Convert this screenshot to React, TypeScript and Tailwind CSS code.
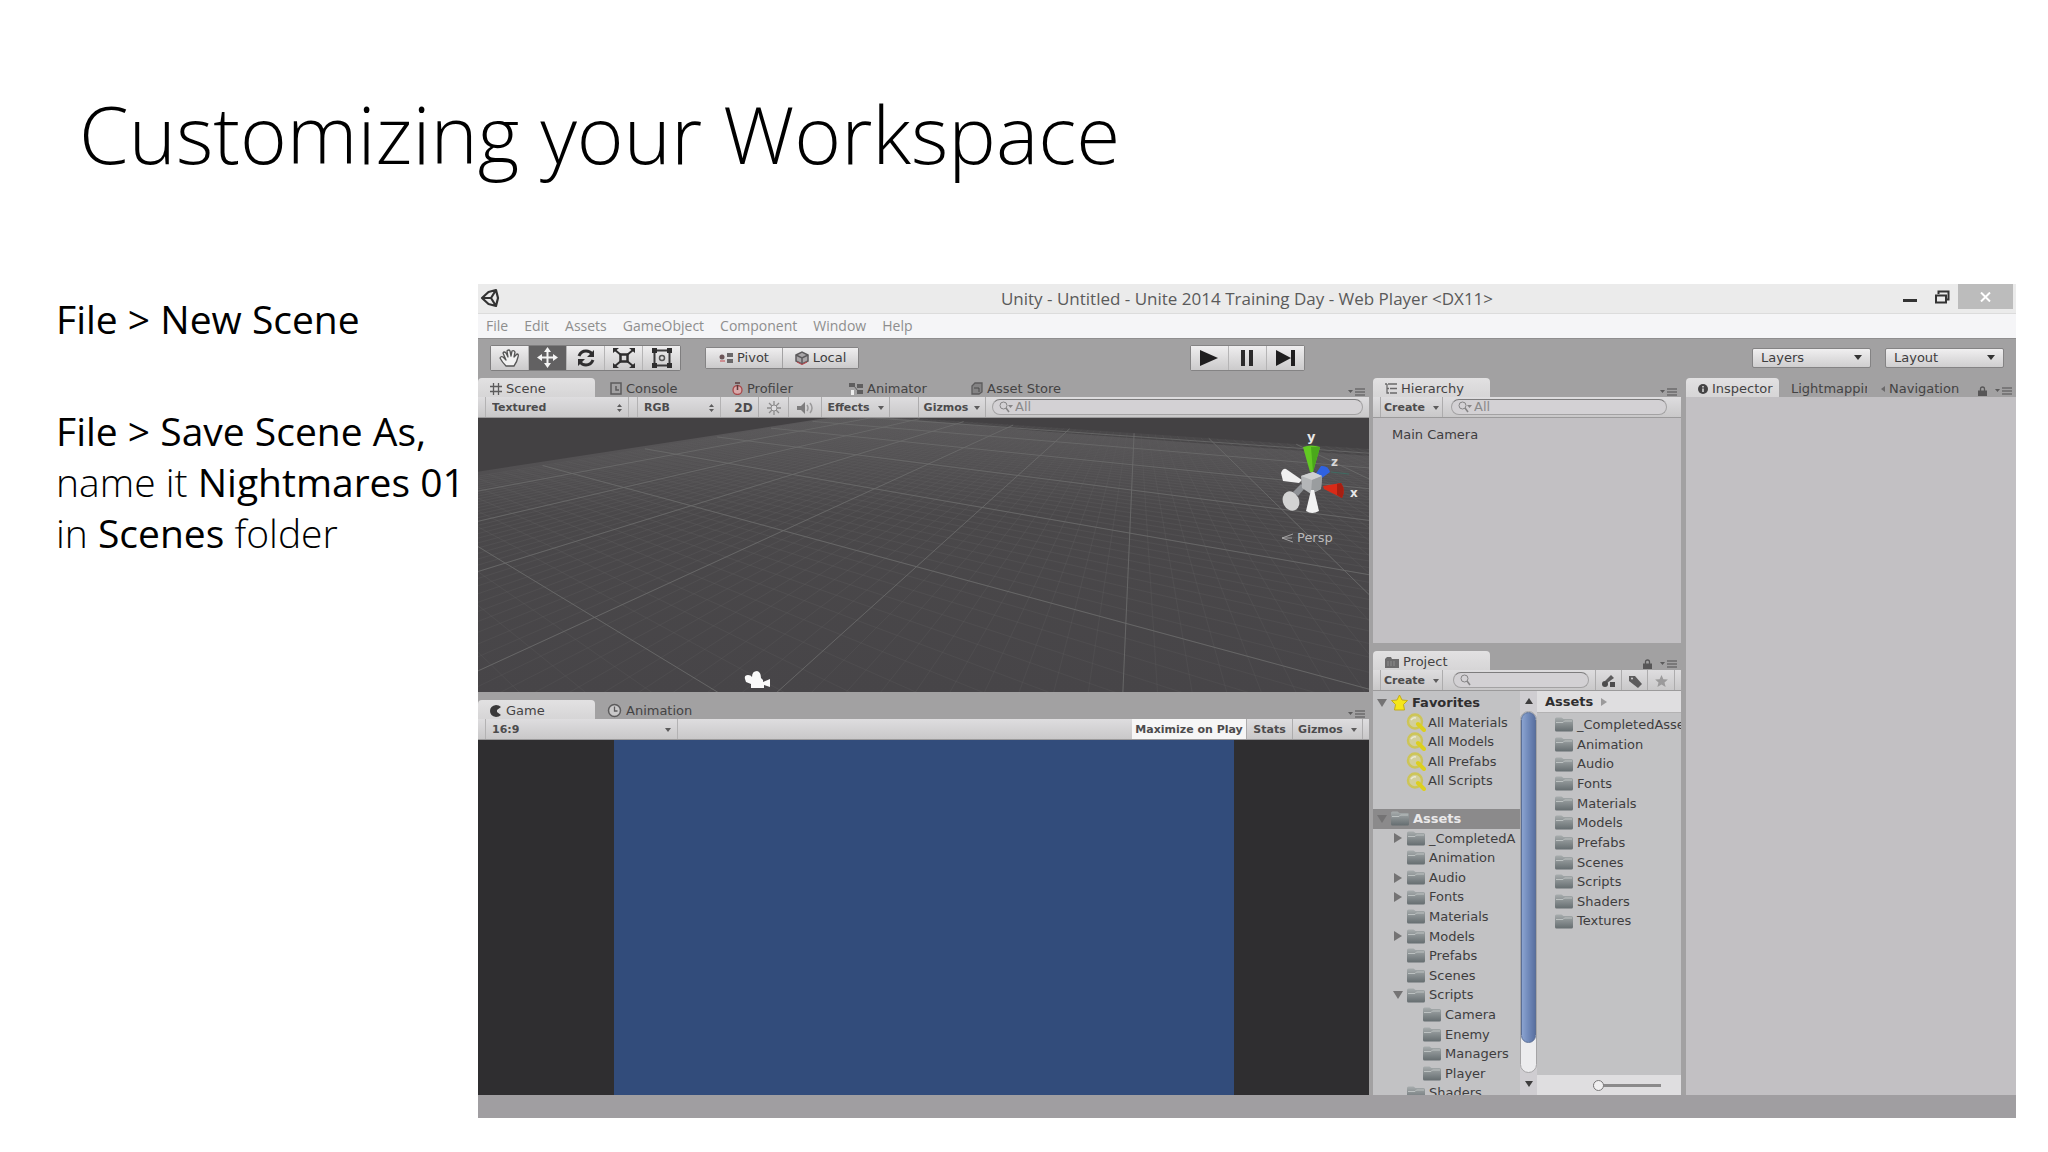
import type { ReactNode } from "react";

const TREE = [
  { name: "_CompletedAssets", arrow: "right", depth: 1, label: "_CompletedA" },
  { name: "Animation", depth: 1 },
  { name: "Audio", arrow: "right", depth: 1 },
  { name: "Fonts", arrow: "right", depth: 1 },
  { name: "Materials", depth: 1 },
  { name: "Models", arrow: "right", depth: 1 },
  { name: "Prefabs", depth: 1 },
  { name: "Scenes", depth: 1 },
  { name: "Scripts", arrow: "down", depth: 1 },
  { name: "Camera", depth: 2 },
  { name: "Enemy", depth: 2 },
  { name: "Managers", depth: 2 },
  { name: "Player", depth: 2 },
  { name: "Shaders", depth: 1 },
];

const ASSETS = [
  "_CompletedAssets",
  "Animation",
  "Audio",
  "Fonts",
  "Materials",
  "Models",
  "Prefabs",
  "Scenes",
  "Scripts",
  "Shaders",
  "Textures",
];

/* ---------- icons ---------- */

function Folder() {
  return (
    <svg width="18" height="15" viewBox="0 0 18 15" className="shrink-0">
      <defs>
        <linearGradient id="folder" x1="0" y1="0" x2="0" y2="1">
          <stop offset="0" stopColor="#a7acad" />
          <stop offset="1" stopColor="#656d70" />
        </linearGradient>
      </defs>
      <path d="M0 2Q0 0.500 1.500 0.500H6.500L8.500 2H16.500Q18 2 18 3.500V13Q18 14.500 16.500 14.500H1.500Q0 14.500 0 13z" fill="url(#folder)" />
      <path d="M1 5.500H8L9.500 4H17" stroke="#bcc1c1" fill="none" />
    </svg>
  );
}

function Arrow({ dir }: { dir: string }) {
  return (
    <svg width="10" height="10" viewBox="0 0 10 10" className="shrink-0">
      <path d={dir === "down" ? "M0 1H10L5 9z" : "M1 0V10L9 5z"} fill="#747374" />
    </svg>
  );
}

function Caret() {
  return (
    <svg width="6" height="4" viewBox="0 0 6 4" className="shrink-0">
      <path d="M0 0H6L3 4z" fill="#5c5b5c" />
    </svg>
  );
}

function UpDown() {
  return (
    <svg width="5" height="8" viewBox="0 0 5 8" className="shrink-0">
      <path d="M0 3H5L2.500 0zM0 5H5L2.500 8z" fill="#5c5b5c" />
    </svg>
  );
}

function PanelMenu() {
  return (
    <svg width="17" height="8" viewBox="0 0 17 8" className="shrink-0">
      <path d="M0 2H5L2.500 5z" fill="#5c5b5c" />
      <path d="M7 1H17M7 4H17M7 7H17" stroke="#6c6b6c" strokeWidth="1.500" />
    </svg>
  );
}

function Lock() {
  return (
    <svg width="9" height="10" viewBox="0 0 9 10" className="shrink-0">
      <path d="M2.500 5V3Q2.500 1 4.500 1T6.500 3V5" stroke="#575657" fill="none" strokeWidth="1.300" />
      <rect y="4.500" width="9" height="5.500" fill="#575657" />
    </svg>
  );
}

function Magnifier({ caret }: { caret?: boolean }) {
  return (
    <svg width="14" height="12" viewBox="0 0 14 12" className="shrink-0">
      <circle cx="4.500" cy="4.500" r="3.500" stroke="#858485" fill="none" />
      <path d="M7 7L10 11" stroke="#858485" strokeWidth="1.500" />
      {caret && <path d="M9 4H14L11.500 7z" fill="#858485" />}
    </svg>
  );
}

function FavoriteSearch() {
  return (
    <svg width="20" height="19" viewBox="0 0 20 19" className="shrink-0">
      <circle cx="9" cy="8.500" r="7" fill="#d2cf9c" stroke="#cdc558" strokeWidth="2.500" />
      <path d="M12 11L18 17" stroke="#dccf1e" strokeWidth="4" strokeLinecap="round" />
      <path d="M5 7Q7 4 10 5" stroke="#ecead2" strokeWidth="1.500" fill="none" />
    </svg>
  );
}

function UnityLogo() {
  return (
    <svg width="20" height="20" viewBox="0 0 20 20">
      <path
        d="M2 10L8.500 4L16 2L18 10L16 18L8.500 16zM2 10H11M11 10L16 2M11 10L16 18"
        fill="none"
        stroke="#333"
        strokeWidth="2.200"
        strokeLinejoin="round"
      />
    </svg>
  );
}

/* ---------- scene floor ---------- */

// unit square -> floor quad in perspective
function project(a: number, b: number) {
  const w = 1 - 0.3643 * a + 0.6961 * b;
  return `${((540 + 178.4 * a + 799.9 * b) / w).toFixed(1)} ${((362 + 44.9 * a - 87.2 * b) / w).toFixed(1)}`;
}

const A_MIN = -1.85;
const B_MAX = 2.67;

function floorLines(step: number) {
  let d = "";
  for (let i = Math.ceil(A_MIN / step); i * step < 6; i++) {
    const a = i * step;
    const near = (0.12 - 1 + 0.3643 * a) / 0.6961;
    if (near < B_MAX) d += `M${project(a, near)}L${project(a, B_MAX)}`;
  }
  for (let i = Math.ceil(-1.4 / step); i * step <= B_MAX; i++) {
    const b = i * step;
    const near = (1 + 0.6961 * b - 0.12) / 0.3643;
    if (near > A_MIN) d += `M${project(A_MIN, b)}L${project(near, b)}`;
  }
  return d;
}

function SceneView() {
  return (
    <div className="relative h-[274px] shrink-0 overflow-hidden bg-[#434143]">
      <svg className="block h-full w-full" viewBox="14 24 1535 822" preserveAspectRatio="none">
        <defs>
          <linearGradient id="floor" x1="0" y1="0" x2="0" y2="1">
            <stop offset="0" stopColor="#5a585a" />
            <stop offset="0.350" stopColor="#4a484a" />
            <stop offset="1" stopColor="#474548" />
          </linearGradient>
          <linearGradient id="fade" gradientUnits="userSpaceOnUse" x1="0" y1="24" x2="0" y2="846">
            <stop offset="0" stopColor="#5e5d5e" stopOpacity="0.200" />
            <stop offset="0.250" stopColor="#5e5d5e" stopOpacity="0.400" />
            <stop offset="1" stopColor="#5e5d5e" stopOpacity="0.250" />
          </linearGradient>
        </defs>
        <path d="M14 185L600 28L620 24H730L1000 66L1549 138V846H14z" fill="url(#floor)" />
        <path d={floorLines(0.05)} stroke="url(#fade)" fill="none" vectorEffect="non-scaling-stroke" />
        <path
          d={floorLines(0.5)}
          stroke="#6c6b6c"
          strokeOpacity="0.800"
          fill="none"
          vectorEffect="non-scaling-stroke"
        />
      </svg>

      {/* camera gizmo */}
      <svg className="absolute bottom-0.5 left-[266px]" width="27" height="20" viewBox="0 0 27 20">
        <path
          d="M1 9Q0 5 4 5Q7 5 8 7Q8 1 13 1Q17 2 17 8L19 10V12L26 9V17L20 15V18H7V14L2 12z"
          fill="#fafafa"
        />
      </svg>

      {/* axis gizmo */}
      <div className="absolute right-2 top-3 w-20 font-['DejaVu_Sans'] text-[#b9b8b9]">
        <svg width="80" height="86" viewBox="0 0 80 86">
          <text x="26" y="11" fontSize="13" fontWeight="bold" fill="#e8e8e8">y</text>
          <text x="50" y="36" fontSize="12" fontWeight="bold" fill="#d8d8d8">z</text>
          <text x="69" y="67" fontSize="12" fontWeight="bold" fill="#e8e8e8">x</text>
          <path d="M22 17Q30 14 39 17L32 42H29z" fill="#62c922" />
          <path d="M30 17L39 17L32 42z" fill="#4aa81b" />
          <path d="M34 45L40 36Q47 35 49 42L41 48z" fill="#2f62e0" />
          <path d="M50 42L68 44" stroke="#3f6b62" />
          <path d="M0 43Q2 38 5 39L21 50L18 53L2 51z" fill="#f0f0f0" />
          <path d="M12 62L20 54L24 58L17 66z" fill="#8f9296" />
          <ellipse cx="10" cy="71" rx="8" ry="10" transform="rotate(-25 10 71)" fill="#d3d3d3" />
          <path d="M20 46L32 42L41 46L40 59L30 64L21 58z" fill="#b4b6b8" />
          <path d="M20 46L32 42L41 46L31 50z" fill="#cfd0d1" />
          <path d="M31 50L41 46L40 59L30 64z" fill="#9a9d9f" />
          <path d="M30 60L33 60L38 81Q31 85 25 81z" fill="#f2f2f2" />
          <path d="M42 56L60 53Q65 60 61 68L43 59z" fill="#d92a17" />
          <path d="M56 54L60 53Q65 60 61 68L56 65z" fill="#a61f12" />
        </svg>
        <div className="mt-3 flex items-center gap-1 text-[13px]">
          <svg width="12" height="10" viewBox="0 0 12 10">
            <path d="M12 1L1 5L12 9M1 5H11" stroke="#a5a4a5" fill="none" />
          </svg>
          Persp
        </div>
      </div>
    </div>
  );
}

/* ---------- building blocks ---------- */

function Tab({
  icon,
  children,
  active,
  className = "w-[117px]",
}: {
  icon?: ReactNode;
  children: ReactNode;
  active?: boolean;
  className?: string;
}) {
  return (
    <button
      role="tab"
      aria-selected={!!active}
      className={`flex h-[19px] shrink-0 items-center gap-1 overflow-hidden whitespace-nowrap pl-3 pt-0.5 text-[13px] text-[#444344] ${
        active ? "rounded-t-sm bg-linear-to-b from-[#e2e1e2] to-[#d6d5d6]" : ""
      } ${className}`}
    >
      {icon}
      {children}
    </button>
  );
}

function Bar({ children }: { children: ReactNode }) {
  return (
    <div className="flex h-[21px] shrink-0 items-stretch border-b border-[#9b9a9b] bg-linear-to-b from-[#dedddf] to-[#c9c8c9] pl-[7px] text-[11px] font-bold text-[#4c4b4c]">
      {children}
    </div>
  );
}

function BarButton({
  children,
  className = "",
  label,
}: {
  children: ReactNode;
  className?: string;
  label?: string;
}) {
  return (
    <button
      aria-label={label}
      className={`flex shrink-0 items-center justify-center whitespace-nowrap border-r border-[#adacad] pt-0.5 ${className}`}
    >
      {children}
    </button>
  );
}

function BarSelect({
  label,
  value,
  className,
  icon,
}: {
  label: string;
  value: string;
  className: string;
  icon: ReactNode;
}) {
  return (
    <label className={`flex shrink-0 items-center border-x border-[#b3b2b3] px-1.5 pt-0.5 ${className}`}>
      <select aria-label={label} className="min-w-0 flex-1 appearance-none bg-transparent outline-none">
        <option>{value}</option>
      </select>
      {icon}
    </label>
  );
}

function Search({ label, value, className = "" }: { label: string; value?: string; className?: string }) {
  return (
    <label
      className={`my-0.5 flex items-center gap-0.5 rounded-full border border-[#a3a2a3] border-t-[#7d7c7d] bg-[#d3d1d4] pl-1.5 ${className}`}
    >
      <Magnifier caret={!!value} />
      <input
        aria-label={label}
        defaultValue={value}
        className="w-full min-w-0 bg-transparent text-[13px] font-normal text-[#8a898a] outline-none"
      />
    </label>
  );
}

function ToolButton({ label, active, children }: { label: string; active?: boolean; children: ReactNode }) {
  return (
    <button
      aria-label={label}
      className={`flex h-6 w-[37px] items-center justify-center ${
        active ? "bg-[#626162]" : "bg-linear-to-b from-[#efeeef] to-[#cbcacb]"
      }`}
    >
      {children}
    </button>
  );
}

function TopSelect({ label }: { label: string }) {
  return (
    <label className="flex h-5 w-[119px] items-center rounded-xs border border-[#848384] bg-linear-to-b from-[#f0eff0] to-[#cfcecf] px-2 text-[13px] text-[#3e3d3e]">
      <select aria-label={label} className="min-w-0 flex-1 appearance-none bg-transparent outline-none">
        <option>{label}</option>
      </select>
      <svg width="8" height="5" viewBox="0 0 8 5">
        <path d="M0 0H8L4 5z" fill="#333" />
      </svg>
    </label>
  );
}

/* ---------- window chrome ---------- */

function TitleBar() {
  return (
    <div className="flex h-[30px] shrink-0 items-start border-b border-[#dcdcdc] bg-[#ebebeb]">
      <div className="flex w-[124px] items-center pl-0.5 pt-1">
        <UnityLogo />
      </div>
      <div className="flex-1 text-center font-['Open_Sans'] text-[17px] leading-[30px] text-[#5a5a5a]">
        Unity - Untitled - Unite 2014 Training Day - Web Player &lt;DX11&gt;
      </div>
      <div className="flex w-[124px] items-start justify-end pr-[3px]">
        <button aria-label="Minimize" className="flex h-[25px] w-8 items-center justify-center pt-2">
          <svg width="14" height="3" viewBox="0 0 14 3">
            <path d="M0 1.500H14" stroke="#333" strokeWidth="3" />
          </svg>
        </button>
        <button aria-label="Restore" className="flex h-[25px] w-8 items-center justify-center">
          <svg width="15" height="14" viewBox="0 0 15 14">
            <path d="M3.500 4V1.500H13.500V9.500H11" stroke="#333" strokeWidth="2" fill="none" />
            <path d="M1 5.500H11V12.500H1z" stroke="#333" strokeWidth="2" fill="none" />
          </svg>
        </button>
        <button aria-label="Close" className="flex h-[25px] w-[55px] items-center justify-center bg-[#bcbcbc]">
          <svg width="11" height="10" viewBox="0 0 11 10">
            <path d="M1 0.500L10 9.500M10 0.500L1 9.500" stroke="#fff" strokeWidth="2" />
          </svg>
        </button>
      </div>
    </div>
  );
}

function MenuBar() {
  return (
    <nav className="flex h-6 shrink-0 items-center gap-4 bg-[#f5f5f7] pl-2 font-['Open_Sans'] text-sm text-[#8e8e8e]">
      <button>File</button>
      <button>Edit</button>
      <button>Assets</button>
      <button>GameObject</button>
      <button>Component</button>
      <button>Window</button>
      <button>Help</button>
    </nav>
  );
}

function Toolbar() {
  return (
    <div className="grid h-10 shrink-0 grid-cols-[1fr_auto_1fr] items-center border-t border-[#8f8e8f] px-3 pb-0.5">
      <div className="flex items-center gap-6">
        <div className="flex gap-px rounded-xs border border-[#7f7e7f] bg-[#b5b4b5]">
          <ToolButton label="Hand">
            <svg width="22" height="20" viewBox="0 0 22 20">
              <path
                d="M7 18Q3 14 1 10Q2 8 4 9L7 12L4 5Q5 3 7 5L9 9L8 3Q10 1 11 3L12 8L13 3Q15 2 16 4L15 9L18 6Q20 6 19 9Q18 14 15 18z"
                fill="#f2f2f2"
                stroke="#555"
                strokeWidth="1.300"
                strokeLinejoin="round"
              />
            </svg>
          </ToolButton>
          <ToolButton label="Move" active>
            <svg width="21" height="21" viewBox="0 0 21 21">
              <path d="M10.500 4V17M4 10.500H17" stroke="#f5f5f5" strokeWidth="2" />
              <path
                d="M10.500 0L14 5H7zM10.500 21L14 16H7zM0 10.500L5 7V14zM21 10.500L16 7V14z"
                fill="#f5f5f5"
              />
            </svg>
          </ToolButton>
          <ToolButton label="Rotate">
            <svg width="20" height="18" viewBox="0 0 20 18">
              <path d="M3 7Q5 2 10 2Q14 2 16 5" stroke="#2f2e2f" strokeWidth="3" fill="none" />
              <path d="M17 11Q15 16 10 16Q6 16 4 13" stroke="#2f2e2f" strokeWidth="3" fill="none" />
              <path d="M18 1V8H11zM2 17V10H9z" fill="#2f2e2f" />
            </svg>
          </ToolButton>
          <ToolButton label="Scale">
            <svg width="22" height="20" viewBox="0 0 22 20">
              <path d="M2 2L8 7M20 2L14 7M2 18L8 13M20 18L14 13" stroke="#2f2e2f" strokeWidth="2" />
              <path d="M0 0H6L0 5zM22 0H16L22 5zM0 20H6L0 15zM22 20H16L22 15z" fill="#2f2e2f" />
              <rect x="7.500" y="6.500" width="7" height="7" stroke="#2f2e2f" strokeWidth="2.500" fill="none" />
            </svg>
          </ToolButton>
          <ToolButton label="Rect">
            <svg width="20" height="20" viewBox="0 0 20 20">
              <rect x="2.500" y="2.500" width="15" height="15" stroke="#3a393a" strokeWidth="2" fill="none" />
              <path d="M0 0H5V5H0zM15 0H20V5H15zM0 15H5V20H0zM15 15H20V20H15z" fill="#2f2e2f" />
              <circle cx="10" cy="10" r="2.500" stroke="#555" strokeWidth="1.500" fill="none" />
            </svg>
          </ToolButton>
        </div>
        <div className="flex gap-px rounded-xs border border-[#848384] bg-[#a3a2a3] text-[13px] text-[#3e3d3e]">
          <button className="flex h-5 w-[76px] items-center justify-center gap-1 bg-linear-to-b from-[#efeeef] to-[#cbcacb]">
            <svg width="14" height="10" viewBox="0 0 14 10">
              <circle cx="3" cy="4" r="2.500" fill="#6b5558" />
              <path d="M8 0H14V4H8zM8 6H14V10H8z" fill="#6a686a" />
              <path d="M1 8H6" stroke="#c4474f" />
            </svg>
            Pivot
          </button>
          <button className="flex h-5 w-[75px] items-center justify-center gap-1 bg-linear-to-b from-[#efeeef] to-[#cbcacb]">
            <svg width="14" height="14" viewBox="0 0 14 14">
              <path d="M1 4L7 1L13 4V10L7 13L1 10z" fill="#a9a6a8" stroke="#5d5b5d" strokeWidth="1.500" />
              <path d="M1 4L7 7L13 4M7 7V13" stroke="#5d5b5d" strokeWidth="1.500" fill="none" />
              <path d="M2 11L7 13.500L12 11" stroke="#c4474f" fill="none" />
            </svg>
            Local
          </button>
        </div>
      </div>
      <div className="flex gap-px rounded-xs border border-[#848384] bg-[#b5b4b5]">
        <ToolButton label="Play">
          <svg width="18" height="16" viewBox="0 0 18 16">
            <path d="M0 0L18 8L0 16z" fill="#1f1e1f" />
          </svg>
        </ToolButton>
        <ToolButton label="Pause">
          <svg width="12" height="16" viewBox="0 0 12 16">
            <path d="M0 0H4V16H0zM8 0H12V16H8z" fill="#2c2b2c" />
          </svg>
        </ToolButton>
        <ToolButton label="Step">
          <svg width="19" height="16" viewBox="0 0 19 16">
            <path d="M0 0L15 8L0 16zM15 0H19V16H15z" fill="#1f1e1f" />
          </svg>
        </ToolButton>
      </div>
      <div className="flex justify-end gap-3.5">
        <TopSelect label="Layers" />
        <TopSelect label="Layout" />
      </div>
    </div>
  );
}

/* ---------- panels ---------- */

function ScenePanel() {
  return (
    <section className="shrink-0">
      <div role="tablist" className="flex">
        <Tab
          active
          icon={
            <svg width="12" height="12" viewBox="0 0 12 12">
              <path d="M3.500 0V12M8.500 0V12M0 3.500H12M0 8.500H12" stroke="#5c5b5c" strokeWidth="1.300" />
            </svg>
          }
        >
          Scene
        </Tab>
        <Tab
          className="ml-[3px] w-[122px]"
          icon={
            <svg width="12" height="13" viewBox="0 0 12 13">
              <path d="M1 1H11V12H1zM6 4V8H9" stroke="#5c5b5c" strokeWidth="1.500" fill="none" />
            </svg>
          }
        >
          Console
        </Tab>
        <Tab
          icon={
            <svg width="11" height="13" viewBox="0 0 11 13">
              <circle cx="5.500" cy="8" r="4.500" fill="#d9a9aa" stroke="#a8484a" strokeWidth="1.300" />
              <path d="M5.500 8V3M3 1H8" stroke="#5c3a3b" strokeWidth="1.500" />
            </svg>
          }
        >
          Profiler
        </Tab>
        <Tab
          className="w-[122px]"
          icon={
            <svg width="14" height="12" viewBox="0 0 14 12">
              <path d="M0 0H6V4H0zM8 1H14V5H8zM8 7H14V11H8z" fill="#5f5e5f" />
              <path d="M2 7H5V12H2z" fill="#ececec" />
              <path d="M5 3L9 8" stroke="#5f5e5f" />
            </svg>
          }
        >
          Animator
        </Tab>
        <Tab
          icon={
            <svg width="12" height="13" viewBox="0 0 12 13">
              <path d="M1 4L4 1H11V10L8 12H1z" fill="#848384" stroke="#5c5b5c" strokeWidth="1.300" />
              <path d="M3 6H8V10" stroke="#4b4a4b" fill="none" />
            </svg>
          }
        >
          Asset Store
        </Tab>
        <button aria-label="Panel menu" className="ml-auto pr-1 pt-2">
          <PanelMenu />
        </button>
      </div>
      <Bar>
        <BarSelect label="Draw mode" value="Textured" className="w-[144px]" icon={<UpDown />} />
        <BarSelect label="Render mode" value="RGB" className="ml-2 w-[84px]" icon={<UpDown />} />
        <BarButton className="ml-2 w-[30px]">
          <span className="text-[12px]">2D</span>
        </BarButton>
        <BarButton label="Scene lighting" className="w-[30px]">
          <svg width="14" height="14" viewBox="0 0 14 14">
            <path d="M7 0V14M0 7H14M2 2L12 12M12 2L2 12" stroke="#8c8b8c" strokeWidth="1.300" />
            <circle cx="7" cy="7" r="3" fill="#dedddf" stroke="#8c8b8c" />
          </svg>
        </BarButton>
        <BarButton label="Audio" className="w-[33px]">
          <svg width="17" height="12" viewBox="0 0 17 12">
            <path d="M0 4H4L8 0V12L4 8H0z" fill="#7d7c7d" />
            <path d="M10 3Q12 6 10 9M13 1Q17 6 13 11" stroke="#9a999a" strokeWidth="1.500" fill="none" />
          </svg>
        </BarButton>
        <BarButton className="w-[68px] gap-2">
          Effects <Caret />
        </BarButton>
        <BarButton className="ml-7 w-[68px] gap-1.5 border-l">
          Gizmos <Caret />
        </BarButton>
        <Search label="Search scene" value="All" className="ml-1.5 mr-1.5 flex-1" />
      </Bar>
      <SceneView />
    </section>
  );
}

function GamePanel() {
  return (
    <section className="flex min-h-0 flex-1 flex-col pt-2">
      <div role="tablist" className="flex">
        <Tab
          active
          icon={
            <svg width="12" height="12" viewBox="0 0 12 12">
              <path d="M6 0Q9 0 11 2L7 5V7L11 10Q9 12 6 12Q0 11 0 6T6 0z" fill="#3a393a" />
            </svg>
          }
        >
          Game
        </Tab>
        <Tab
          icon={
            <svg width="15" height="15" viewBox="0 0 15 15">
              <circle cx="7.500" cy="7.500" r="6" fill="#c9c8c9" stroke="#5c5b5c" strokeWidth="1.500" />
              <path d="M7.500 3.500V8H10.500" stroke="#5c5b5c" strokeWidth="1.300" fill="none" />
            </svg>
          }
        >
          Animation
        </Tab>
        <button aria-label="Panel menu" className="ml-auto pr-1 pt-2">
          <PanelMenu />
        </button>
      </div>
      <Bar>
        <BarSelect label="Aspect" value="16:9" className="w-[193px]" icon={<Caret />} />
        <BarButton className="ml-auto w-[115px] bg-[#f6f6f6]">Maximize on Play</BarButton>
        <BarButton className="w-[46px]">Stats</BarButton>
        <BarButton className="mr-1.5 w-[70px] gap-2">
          Gizmos <Caret />
        </BarButton>
      </Bar>
      <div className="flex flex-1 justify-center bg-[#2f2e30]">
        <div className="w-[620px] bg-[#324c7b]" />
      </div>
    </section>
  );
}

function HierarchyPanel() {
  return (
    <section className="flex h-[265px] shrink-0 flex-col">
      <div role="tablist" className="flex">
        <Tab
          active
          icon={
            <svg width="12" height="11" viewBox="0 0 12 11">
              <path d="M0 1H2M3 1H12M5 5.500H12M5 10H12M2 1V10H4M2 5.500H4" stroke="#6a696a" fill="none" strokeWidth="1.300" />
            </svg>
          }
        >
          Hierarchy
        </Tab>
        <button aria-label="Panel menu" className="ml-auto pr-1 pt-2">
          <PanelMenu />
        </button>
      </div>
      <Bar>
        <BarButton className="w-[63px] gap-2 border-l">
          Create <Caret />
        </BarButton>
        <Search label="Search hierarchy" value="All" className="ml-2 mr-3.5 flex-1" />
      </Bar>
      <ul className="flex-1 bg-[#c2c0c3] pl-[19px] pt-[7px] text-[13px] text-[#3e3d3e]">
        <li>
          <button>Main Camera</button>
        </li>
      </ul>
    </section>
  );
}

function FavoritesTree() {
  return (
    <div className="min-w-0 flex-1 overflow-hidden bg-[#c2c2c4] pt-0.5">
      <ul className="grid h-[98px] auto-rows-fr">
        <li className="flex items-center gap-1 pl-1 text-[13px] font-bold text-[#2f2e2f]">
          <Arrow dir="down" />
          <svg width="17" height="17" viewBox="0 0 17 17" className="shrink-0">
            <path
              d="M8.500 1L11 6L16.500 6.500L12.500 10.500L13.500 16H3.500L4.500 10.500L0.500 6.500L6 6z"
              fill="#f5e61a"
              stroke="#c4ab1a"
            />
          </svg>
          Favorites
        </li>
        {["All Materials", "All Models", "All Prefabs", "All Scripts"].map((name) => (
          <li key={name} className="flex items-center gap-0.5 whitespace-nowrap pl-[33px]">
            <FavoriteSearch />
            {name}
          </li>
        ))}
      </ul>
      <ul className="mt-[18px] grid h-[294px] auto-rows-fr">
        <li className="flex items-center gap-1 bg-[#8b8a8b] pl-1 text-[13px] font-bold text-[#e9e8e9]">
          <Arrow dir="down" />
          <Folder />
          Assets
        </li>
        {TREE.map((item) => (
          <li
            key={item.name}
            className={`flex items-center gap-1 whitespace-nowrap ${item.depth === 2 ? "pl-[50px]" : item.arrow ? "pl-5" : "pl-[34px]"}`}
          >
            {item.arrow && <Arrow dir={item.arrow} />}
            <Folder />
            {item.label ?? item.name}
          </li>
        ))}
      </ul>
    </div>
  );
}

function TreeScrollbar() {
  return (
    <div className="flex w-[17px] shrink-0 flex-col bg-[#cfcdd1]">
      <button aria-label="Scroll up" className="flex h-5 items-center justify-center">
        <svg width="8" height="6" viewBox="0 0 8 6">
          <path d="M0 6H8L4 0z" fill="#3e3d3e" />
        </svg>
      </button>
      <div className="flex flex-1 flex-col rounded-full border border-[#a5a4a6] bg-[#ececee]">
        <div className="h-[92%] rounded-full border border-[#5b6f96] bg-linear-to-r from-[#8ba3d0] via-[#7089ba] to-[#5a70a0]" />
      </div>
      <button aria-label="Scroll down" className="flex h-[22px] items-center justify-center">
        <svg width="8" height="6" viewBox="0 0 8 6">
          <path d="M0 0H8L4 6z" fill="#3e3d3e" />
        </svg>
      </button>
    </div>
  );
}

function ProjectPanel() {
  return (
    <section className="flex min-h-0 flex-1 flex-col pt-2">
      <div role="tablist" className="flex">
        <Tab
          active
          icon={
            <svg width="14" height="12" viewBox="0 0 14 12">
              <path d="M0 3L2 1H6L7 3H14V12H0z" fill="#6d6c6d" />
              <path d="M3 5V10M6 5V10M9 5V10" stroke="#8f8e8f" />
            </svg>
          }
        >
          Project
        </Tab>
        <div className="ml-auto flex items-center gap-2 pr-1 pt-1.5">
          <button aria-label="Lock">
            <Lock />
          </button>
          <button aria-label="Panel menu">
            <PanelMenu />
          </button>
        </div>
      </div>
      <Bar>
        <BarButton className="w-[63px] gap-2 border-l">
          Create <Caret />
        </BarButton>
        <Search label="Search project" className="ml-2.5 mr-1.5 flex-1" />
        <BarButton label="Search by type" className="w-[27px] border-l">
          <svg width="14" height="13" viewBox="0 0 14 13">
            <path d="M9 0L12 3L5 8L3 6z" fill="#5c5b5c" />
            <circle cx="3" cy="9" r="3" fill="#4c4b4c" />
            <path d="M8 7H13V12H8z" fill="#4c4b4c" />
          </svg>
        </BarButton>
        <BarButton label="Search by label" className="w-[26px]">
          <svg width="14" height="13" viewBox="0 0 14 13">
            <path d="M1 1H7L14 9L10 13L1 6z" fill="#5c5b5c" />
            <circle cx="4" cy="3.500" r="1" fill="#d3d2d3" />
          </svg>
        </BarButton>
        <BarButton label="Save search" className="mr-1.5 w-[27px]">
          <svg width="13" height="12" viewBox="0 0 17 16">
            <path d="M8.500 0L11 5.500L17 6L12.500 10L14 16L8.500 12.500L3 16L4.500 10L0 6L6 5.500z" fill="#9b9a9b" />
          </svg>
        </BarButton>
      </Bar>
      <div className="flex min-h-0 flex-1 text-[13px] text-[#3e3d3e]">
        <FavoritesTree />
        <TreeScrollbar />
        <div className="flex w-[144px] shrink-0 flex-col bg-[#c2c2c4]">
          <div className="flex h-[22px] shrink-0 items-center gap-2 border-b border-[#b3b2b3] bg-[#dfdee0] pl-2 font-bold text-[#2f2e2f]">
            Assets
            <svg width="6" height="8" viewBox="0 0 6 8">
              <path d="M0 0V8L6 4z" fill="#9b9a9b" />
            </svg>
          </div>
          <ul className="mt-0.5 grid h-[216px] shrink-0 auto-rows-fr overflow-hidden">
            {ASSETS.map((name) => (
              <li key={name} className="flex items-center gap-1 pl-[18px]">
                <Folder />
                {name}
              </li>
            ))}
          </ul>
          <div className="mt-auto flex h-5 items-center justify-end bg-[#dfdee0] pr-5">
            <input
              type="range"
              aria-label="Icon size"
              defaultValue={0}
              className="h-3 w-[68px] appearance-none bg-transparent [&::-webkit-slider-runnable-track]:h-[3px] [&::-webkit-slider-runnable-track]:bg-[#8b8a8b] [&::-webkit-slider-thumb]:-mt-1 [&::-webkit-slider-thumb]:size-[11px] [&::-webkit-slider-thumb]:appearance-none [&::-webkit-slider-thumb]:rounded-full [&::-webkit-slider-thumb]:border [&::-webkit-slider-thumb]:border-[#7a797a] [&::-webkit-slider-thumb]:bg-[#f0eff0]"
            />
          </div>
        </div>
      </div>
    </section>
  );
}

function InspectorPanel() {
  return (
    <section className="flex w-[330px] shrink-0 flex-col">
      <div role="tablist" className="flex">
        <Tab
          active
          className="w-[93px] pl-2"
          icon={
            <svg width="10" height="10" viewBox="0 0 10 10" className="shrink-0">
              <circle cx="5" cy="5" r="5" fill="#444344" />
              <path d="M5 2V3.500M5 4.500V8" stroke="#ddd" strokeWidth="1.500" />
            </svg>
          }
        >
          Inspector
        </Tab>
        <Tab className="w-[90px]">
          <span className="w-[76px] overflow-hidden text-left">Lightmapping</span>
        </Tab>
        <Tab
          className="w-[102px]"
          icon={
            <svg width="4" height="6" viewBox="0 0 4 6">
              <path d="M4 0V6L0 3z" fill="#6a696a" />
            </svg>
          }
        >
          Navigation
        </Tab>
        <div className="ml-auto flex items-center gap-2 pr-1 pt-1.5">
          <button aria-label="Lock">
            <Lock />
          </button>
          <button aria-label="Panel menu">
            <PanelMenu />
          </button>
        </div>
      </div>
      <div className="flex-1 bg-[#c2c0c3]" />
    </section>
  );
}

export default function App() {
  return (
    <main className="flex h-screen flex-col bg-white pb-[34px] pr-8 text-black">
      <h1 className="h-[284px] shrink-0 pl-[79px] pt-[73px] font-['Open_Sans'] text-[80px] font-light leading-[120px]">
        Customizing your Workspace
      </h1>

      <div className="flex min-h-0 flex-1">
        <div className="w-[478px] shrink-0 whitespace-nowrap pl-[56px] pt-[9px] font-['Open_Sans'] text-[39px] font-light leading-[51px]">
          <p>
            <strong className="font-normal">File &gt; New Scene</strong>
          </p>
          <p className="mt-[61px]">
            <strong className="font-normal">File &gt; Save Scene As,</strong>
            <br />
            name it <strong className="font-normal">Nightmares 01</strong>
            <br />
            in <strong className="font-normal">Scenes</strong> folder
          </p>
        </div>

        <div className="flex min-w-0 flex-1 flex-col bg-[#a2a1a2] font-['DejaVu_Sans']">
          <TitleBar />
          <MenuBar />
          <Toolbar />
          <div className="flex min-h-0 flex-1">
            <div className="flex min-w-0 flex-1 flex-col">
              <ScenePanel />
              <GamePanel />
            </div>
            <div className="ml-1 mr-[5px] flex w-[308px] shrink-0 flex-col">
              <HierarchyPanel />
              <ProjectPanel />
            </div>
            <InspectorPanel />
          </div>
          <footer className="h-[23px] shrink-0 bg-[#a09ea1]" />
        </div>
      </div>
    </main>
  );
}
